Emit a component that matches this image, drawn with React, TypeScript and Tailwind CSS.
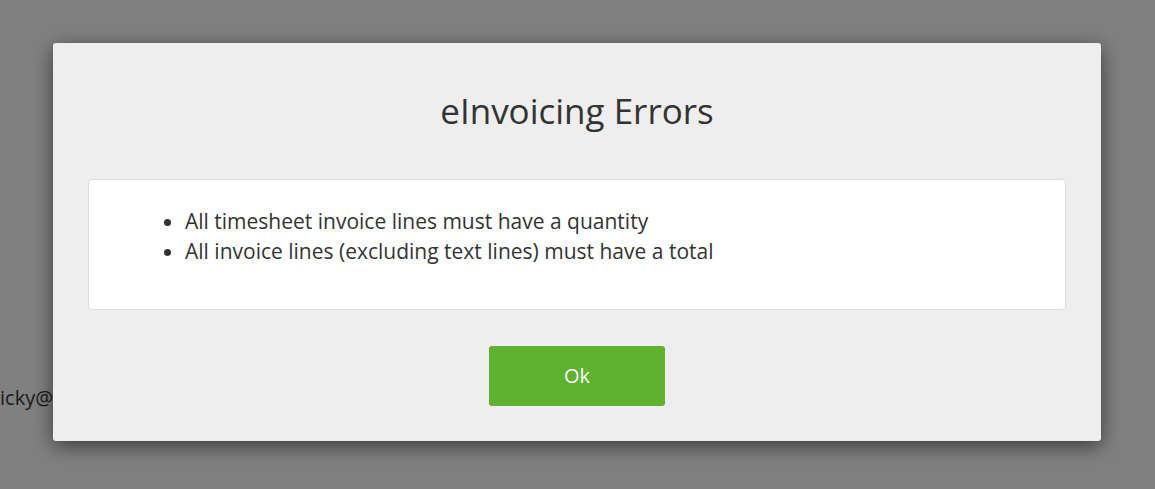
import React from "react";

export default function App() {
  return (
    <div className="relative w-[1155px] h-[489px] overflow-hidden bg-[#808080] font-['Open_Sans',sans-serif]">
      <div className="absolute left-0 top-[383px] text-[20px] leading-[30px] text-[#1a1a1a]">
        icky@example.com
      </div>
      <div className="absolute left-[53px] top-[43px] w-[1048px] h-[398px] rounded-[3px] bg-[#eeeeee] shadow-[0_5px_20px_rgba(0,0,0,0.55)] flex flex-col items-center px-[35px]">
        <h1 className="mt-[48px] h-[40px] text-[35px] leading-[40px] text-[#333333] font-normal">
          eInvoicing Errors
        </h1>
        <div className="mt-[48px] w-full h-[131px] rounded-[4px] border border-[#dddddd] bg-white pl-[78px] pt-[26px]">
          <ul className="list-disc pl-[18px] text-[21px] leading-[30px] text-[#333333]">
            <li>All timesheet invoice lines must have a quantity</li>
            <li>All invoice lines (excluding text lines) must have a total</li>
          </ul>
        </div>
        <button className="mt-[36px] w-[176px] h-[60px] rounded-[3px] bg-[#5fb130] text-white text-[20px]">
          Ok
        </button>
      </div>
    </div>
  );
}
